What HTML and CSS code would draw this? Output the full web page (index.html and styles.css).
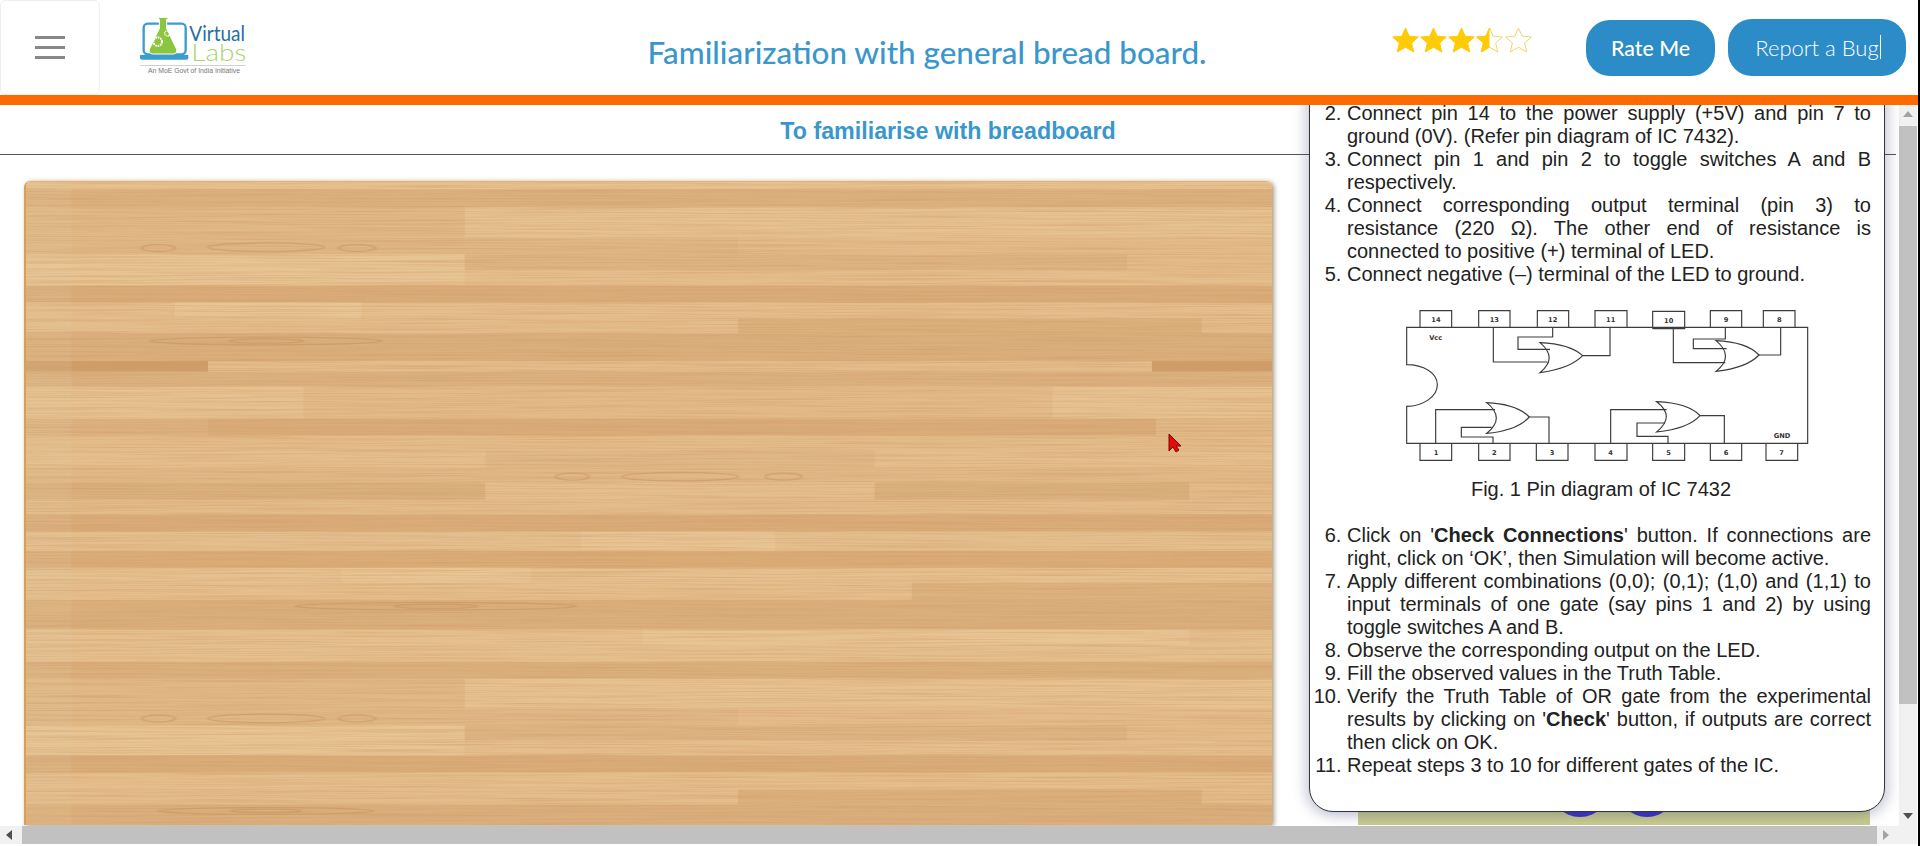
FILE: index.html
```html
<!DOCTYPE html>
<html lang="en">
<head>
  <meta charset="UTF-8" />
  <meta name="viewport" content="width=device-width, initial-scale=1.0"/>
  <title>Familiarization with general bread board.</title>
  <link rel="stylesheet" href="styles.css">
</head>
<body>

  <div class="page">
    <div class="navbar">
      <div class="menu-btn" role="button" aria-label="Menu">
        <span></span><span></span><span></span>
      </div>
      <svg class="logo" viewBox="0 0 450 270" aria-label="Virtual Labs">
        <rect x="71" y="71" width="126" height="92" rx="12" fill="none" stroke="#3b9ccf" stroke-width="7"/>
        <path d="M60 165h145v8q0 6 -6 6h-133q-6 0 -6 -6z" fill="#3b9ccf"/>
        <path d="M118 52h26v6h-4v28l30 62q3 12 -10 14h-62q-13 -2 -10 -14l30 -62v-28h-4z" fill="#8cc63f" stroke="#fff" stroke-width="3"/>
        <circle cx="113" cy="125" r="13" fill="none" stroke="#fff" stroke-width="6" stroke-dasharray="5 2.5"/>
        <circle cx="142" cy="100" r="8" fill="none" stroke="#fff" stroke-width="4" stroke-dasharray="4 2"/>
        <text class="logo-virtual" x="208" y="122" textLength="167" lengthAdjust="spacingAndGlyphs">Virtual</text>
        <text class="logo-labs" x="214" y="184" textLength="165" lengthAdjust="spacingAndGlyphs">Labs</text>
        <rect x="60" y="196" width="316" height="2" fill="#bbb"/>
        <text class="logo-tag" x="84" y="220" textLength="276" lengthAdjust="spacingAndGlyphs">An MoE Govt of India Initiative</text>
      </svg>
      <h1 class="title">Familiarization with general bread board.</h1>
      <svg class="stars" viewBox="0 0 141 26" aria-label="Rated 3.5 out of 5">
        <defs>
          <polygon id="star" points="13.5,1 17.2,9.2 26.3,10 19.6,16 21.8,25 13.5,20.2 5.2,25 7.4,16 0.7,10 9.8,9.2"/>
          <clipPath id="half"><rect x="0" y="0" width="13.5" height="26"/></clipPath>
        </defs>
        <use href="#star" x="0" class="star-full"/>
        <use href="#star" x="28" class="star-full"/>
        <use href="#star" x="56" class="star-full"/>
        <use href="#star" x="84" class="star-empty"/>
        <use href="#star" x="84" class="star-full" clip-path="url(#half)"/>
        <use href="#star" x="113" class="star-empty"/>
      </svg>
      <div class="nav-buttons">
        <button class="nav-btn rate-btn">Rate Me</button>
        <button class="nav-btn bug-btn">Report a Bug<span class="caret"></span></button>
      </div>
    </div>

    <div class="content">
      <h2 class="subtitle">To familiarise with breadboard</h2>
      <div class="workspace">
        <div class="board">
          <svg class="wood" viewBox="30 25 1505 1508" preserveAspectRatio="none">
            <defs>
              <filter id="grain" x="0" y="0" width="100%" height="100%">
                <feTurbulence type="fractalNoise" baseFrequency="0.005 0.3" numOctaves="4" seed="7"/>
                <feColorMatrix values="0 0 0 0 0.62  0 0 0 0 0.32  0 0 0 0 0.14  2.4 0 0 0 -0.95"/>
              </filter>
              <filter id="soft"><feGaussianBlur stdDeviation="1.5"/></filter>
            </defs>
            <rect x="30" y="25" width="1505" height="1508" fill="#e3bc8a"/>
            <rect x="30" y="25" width="1505" height="17" fill="#e8c28e"/>
            <rect x="30" y="42" width="1505" height="43" fill="#dcb17e"/>
            <rect x="30" y="85" width="530" height="70" fill="#e0b986"/>
            <rect x="560" y="85" width="975" height="70" fill="#e6c291"/>
            <rect x="30" y="155" width="860" height="40" fill="#dfb885"/>
            <rect x="890" y="155" width="645" height="40" fill="#e3bc8a"/>
            <rect x="30" y="195" width="530" height="73" fill="#e7c493"/>
            <rect x="560" y="195" width="800" height="37" fill="#ddb582"/>
            <rect x="560" y="232" width="975" height="36" fill="#e4be8c"/>
            <rect x="30" y="268" width="1505" height="40" fill="#d9ac78"/>
            <rect x="30" y="308" width="1505" height="37" fill="#e4be8c"/>
            <rect x="210" y="308" width="225" height="37" fill="#e8c595"/>
            <rect x="30" y="345" width="860" height="35" fill="#e3bd8b"/>
            <rect x="890" y="345" width="560" height="35" fill="#dbb07b"/>
            <rect x="30" y="380" width="1505" height="65" fill="#daaf7b"/>
            <rect x="30" y="445" width="220" height="25" fill="#cf9d68"/>
            <rect x="250" y="445" width="1140" height="25" fill="#e3bd8b"/>
            <rect x="1390" y="445" width="145" height="25" fill="#cf9d68"/>
            <rect x="30" y="470" width="1505" height="35" fill="#dbb17e"/>
            <rect x="30" y="505" width="1505" height="75" fill="#e6c291"/>
            <rect x="365" y="505" width="905" height="75" fill="#e2bb89"/>
            <rect x="30" y="580" width="220" height="40" fill="#dcb27f"/>
            <rect x="250" y="580" width="1145" height="40" fill="#d9ac78"/>
            <rect x="1395" y="580" width="140" height="40" fill="#e0b986"/>
            <rect x="30" y="620" width="1505" height="35" fill="#e3bc8a"/>
            <rect x="30" y="655" width="1505" height="40" fill="#e4bf8d"/>
            <rect x="585" y="655" width="470" height="40" fill="#dfb887"/>
            <rect x="30" y="695" width="1505" height="35" fill="#e0b986"/>
            <rect x="30" y="730" width="555" height="40" fill="#dab07c"/>
            <rect x="585" y="730" width="470" height="40" fill="#e4bf8d"/>
            <rect x="1055" y="730" width="380" height="40" fill="#dab07c"/>
            <rect x="30" y="770" width="1505" height="35" fill="#e2bc8a"/>
            <rect x="30" y="805" width="1505" height="40" fill="#d9ac78"/>
            <rect x="30" y="845" width="1505" height="45" fill="#e4bf8e"/>
            <rect x="700" y="845" width="235" height="45" fill="#e7c494"/>
            <rect x="30" y="890" width="1505" height="40" fill="#d9ac78"/>
            <rect x="30" y="930" width="1505" height="35" fill="#e5c090"/>
            <rect x="410" y="930" width="230" height="35" fill="#e8c595"/>
            <rect x="30" y="965" width="1070" height="40" fill="#e4be8c"/>
            <rect x="1100" y="965" width="435" height="40" fill="#dcb27f"/>
            <rect x="30" y="1005" width="1505" height="70" fill="#daaf7b"/>
            <rect x="30" y="1075" width="1505" height="75" fill="#e5c08f"/>
            <rect x="775" y="1075" width="660" height="35" fill="#e8c595"/>
            <rect x="30" y="1150" width="1505" height="40" fill="#dab07c"/>
            <rect x="30" y="1190" width="530" height="70" fill="#e0b986"/>
            <rect x="560" y="1190" width="975" height="70" fill="#e6c291"/>
            <rect x="30" y="1260" width="860" height="40" fill="#dfb885"/>
            <rect x="890" y="1260" width="645" height="40" fill="#e3bc8a"/>
            <rect x="30" y="1300" width="530" height="70" fill="#e7c493"/>
            <rect x="560" y="1300" width="800" height="35" fill="#ddb582"/>
            <rect x="560" y="1335" width="975" height="35" fill="#e4be8c"/>
            <rect x="30" y="1370" width="1505" height="40" fill="#d9ac78"/>
            <rect x="30" y="1410" width="1505" height="40" fill="#e4be8c"/>
            <rect x="30" y="1450" width="860" height="35" fill="#e3bd8b"/>
            <rect x="890" y="1450" width="560" height="35" fill="#dbb07b"/>
            <rect x="30" y="1485" width="1505" height="48" fill="#daaf7b"/>
            <rect x="30" y="25" width="55" height="1508" fill="#e6cda4" opacity=".18"/>
            <g fill="none" stroke="#c08c55" stroke-width="3" opacity=".45" filter="url(#soft)">
              <ellipse cx="320" cy="398" rx="140" ry="9"/><ellipse cx="320" cy="398" rx="45" ry="5"/>
              <ellipse cx="525" cy="1020" rx="170" ry="9"/><ellipse cx="525" cy="1020" rx="50" ry="5"/>
              <ellipse cx="320" cy="1500" rx="130" ry="8"/><ellipse cx="320" cy="1500" rx="42" ry="4"/>
              <ellipse cx="320" cy="178" rx="70" ry="10"/><ellipse cx="190" cy="180" rx="20" ry="8"/><ellipse cx="430" cy="180" rx="22" ry="8"/>
              <ellipse cx="820" cy="716" rx="70" ry="10"/><ellipse cx="690" cy="716" rx="20" ry="8"/><ellipse cx="945" cy="716" rx="22" ry="8"/>
              <ellipse cx="320" cy="1283" rx="70" ry="10"/><ellipse cx="190" cy="1283" rx="20" ry="8"/><ellipse cx="430" cy="1283" rx="22" ry="8"/>
            </g>
            <rect x="30" y="25" width="1505" height="1508" filter="url(#grain)" opacity=".42"/>
          </svg>
          <svg class="pointer" viewBox="0 0 14 20">
            <path d="M1 1v17l4 -4 3 5 3 -2 -3 -4h5z" fill="#e60b0b" stroke="#7a0505" stroke-width="1"/>
          </svg>
        </div>
        <div class="breadboard">
          <span class="bb-dot bb-dot-a"></span>
          <span class="bb-dot bb-dot-b"></span>
        </div>
      </div>
    </div>

    <div class="instructions">
      <ol class="steps" start="2">
        <li>Connect pin 14 to the power supply (+5V) and pin 7 to ground (0V). (Refer pin diagram of IC 7432).</li>
        <li>Connect pin 1 and pin 2 to toggle switches A and B respectively.</li>
        <li>Connect corresponding output terminal (pin 3) to resistance (220 Ω). The other end of resistance is connected to positive (+) terminal of LED.</li>
        <li>Connect negative (–) terminal of the LED to ground.</li>
      </ol>
      <figure class="pin-fig">
        <svg class="pin-diagram" viewBox="0 40 1320 465">
          <g fill="none" stroke="#3c3c3c" stroke-width="3.5">
            <path d="M80 98H1283V446H80V335C130 335 172 305 172 270S130 210 80 210Z"/>
            <path d="M120 98V48H215V98M296 98V48H390V98M472 98V48H566V98M645 98V48H741V98M818 102V50H914V102H818M991 98V48H1085V98M1150 98V48H1245V98"/>
            <path d="M120 446V497H215V446M296 446V497H390V446M469 446V497H564V446M645 446V497H741V446M818 446V497H914V446M991 446V497H1085V446M1158 446V497H1253V446"/>
            <path d="M340 98V202H502M518 98V127H414V164H510M608 183H690V98"/>
            <path d="M480 144Q570 148 608 183Q570 222 480 234Q535 190 480 144Z"/>
            <path d="M880 98V204H1036M1036 98V133H940V162H1040M1137 181H1202V98"/>
            <path d="M1008 138Q1100 142 1137 181Q1100 220 1008 230Q1065 185 1008 138Z"/>
            <path d="M167 446V345H345M339 446V427H244V398H335M448 367H507V446"/>
            <path d="M320 324Q410 328 448 367Q410 408 320 416Q378 370 320 324Z"/>
            <path d="M692 446V345H860M864 446V425H771V385H855M960 363H1033V446"/>
            <path d="M830 321Q925 325 960 363Q925 402 830 412Q888 365 830 321Z"/>
          </g>
          <g class="pin-labels">
            <text x="168" y="82">14</text><text x="343" y="82">13</text><text x="518" y="82">12</text><text x="692" y="82">11</text>
            <text x="866" y="84">10</text><text x="1038" y="82">9</text><text x="1198" y="82">8</text>
            <text x="168" y="480">1</text><text x="343" y="480">2</text><text x="516" y="480">3</text><text x="692" y="480">4</text>
            <text x="866" y="480">5</text><text x="1038" y="480">6</text><text x="1205" y="480">7</text>
            <text x="167" y="135">Vcc</text><text x="1206" y="429">GND</text>
          </g>
        </svg>
        <figcaption>Fig. 1 Pin diagram of IC 7432</figcaption>
      </figure>
      <ol class="steps" start="6">
        <li>Click on '<b>Check Connections</b>' button. If connections are right, click on ‘OK’, then Simulation will become active.</li>
        <li>Apply different combinations (0,0); (0,1); (1,0) and (1,1) to input terminals of one gate (say pins 1 and 2) by using toggle switches A and B.</li>
        <li>Observe the corresponding output on the LED.</li>
        <li>Fill the observed values in the Truth Table.</li>
        <li>Verify the Truth Table of OR gate from the experimental results by clicking on '<b>Check</b>' button, if outputs are correct then click on OK.</li>
        <li>Repeat steps 3 to 10 for different gates of the IC.</li>
      </ol>
    </div>

    <div class="vscroll">
      <span class="arrow arrow-up"></span>
      <div class="vthumb"></div>
      <span class="arrow arrow-down"></span>
    </div>
    <div class="hscroll">
      <span class="arrow arrow-left"></span>
      <div class="hthumb"></div>
      <span class="arrow arrow-right"></span>
    </div>
  </div>

</body>
</html>
```

FILE: styles.css
```css
* {
  margin: 0;
  padding: 0;
  box-sizing: border-box;
}

body {
  height: 100vh;
  overflow: hidden;
  background: #000;
  font-family: "Liberation Sans", Arial, sans-serif;
}

.page {
  position: relative;
  width: 1918px;
  height: 846px;
  overflow: hidden;
  background: #fff;
}

.navbar {
  position: relative;
  z-index: 3;
  height: 105px;
  display: flex;
  align-items: flex-start;
  background: #fff;
  border-bottom: 10px solid #ff6a00;
}

.menu-btn {
  width: 100px;
  height: 95px;
  border: 1px solid #eee;
  border-radius: 6px;
  display: flex;
  flex-direction: column;
  align-items: center;
  justify-content: center;
  gap: 7px;
}

.menu-btn span {
  display: block;
  width: 30px;
  height: 3px;
  background: #888;
}

.logo {
  width: 150px;
  height: 90px;
  margin-left: 20px;
}

.logo-virtual {
  font-family: "Lato", sans-serif;
  font-size: 64px;
  fill: #1f6f9f;
}

.logo-labs {
  font-family: "Lato", sans-serif;
  font-weight: 300;
  font-size: 72px;
  fill: #a9d273;
}

.logo-tag {
  font-family: "Liberation Sans", sans-serif;
  font-size: 20px;
  fill: #777;
}

.title {
  width: 1122px;
  padding: 33px 0 0 192px;
  text-align: center;
  font-family: "Lato", sans-serif;
  font-size: 31.4px;
  font-weight: 500;
  color: #3a97cb;
  white-space: nowrap;
}

.stars {
  width: 141px;
  height: 26px;
  margin: 27px 0 0 0;
}

.star-full {
  fill: #ffcb05;
  stroke: #ffcb05;
  stroke-width: 1;
}

.star-empty {
  fill: #fff;
  stroke: #f2d66a;
  stroke-width: 1;
}

.nav-buttons {
  display: flex;
  gap: 13px;
  margin: 19px 0 0 53px;
}

.nav-btn {
  height: 56px;
  margin-top: 1px;
  border: none;
  border-radius: 24px;
  background: #2b8cc8;
  color: #fff;
  font-family: "Lato", sans-serif;
}

.rate-btn {
  width: 129px;
  font-size: 21.3px;
  font-weight: 500;
}

.bug-btn {
  position: relative;
  width: 178px;
  height: 57px;
  margin-top: 0;
  font-size: 22px;
  font-weight: 300;
}

.caret {
  position: absolute;
  left: 152px;
  top: 16px;
  width: 1px;
  height: 24px;
  background: #fff;
}

.subtitle {
  height: 50px;
  width: 1896px;
  padding-top: 13px;
  border-bottom: 1px solid #555;
  text-align: center;
  font-size: 23.25px;
  line-height: 26px;
  font-weight: bold;
  color: #3a97cb;
}

.workspace {
  display: flex;
  align-items: flex-start;
  padding: 26px 0 0 24px;
}

.board {
  position: relative;
  width: 1248px;
  height: 644px;
  border-left: 2px solid #d9a04f;
  border-top: 1px solid #e3b36b;
  border-radius: 6px 6px 0 0;
  box-shadow: 2px 1px 5px rgba(90, 60, 20, 0.55);
  overflow: hidden;
}

.wood {
  display: block;
  width: 100%;
  height: 100%;
}

.pointer {
  position: absolute;
  left: 1142px;
  top: 251px;
  width: 14px;
  height: 20px;
}

.breadboard {
  position: relative;
  width: 512px;
  height: 644px;
  margin-left: 86px;
  background: #c9cc8f;
  overflow: hidden;
}

.bb-dot {
  position: absolute;
  top: 576px;
  width: 60px;
  height: 60px;
  border-radius: 50%;
  background: #3a2fc9;
}

.bb-dot-a {
  left: 192px;
}

.bb-dot-b {
  left: 259px;
}

.instructions {
  position: absolute;
  z-index: 2;
  left: 1309px;
  top: 90px;
  width: 576px;
  height: 722px;
  padding: 11px 13px 0 0;
  background: #fff;
  border: 1px solid #333;
  border-radius: 0 0 24px 24px;
  box-shadow: -4px 2px 14px rgba(60, 70, 120, 0.22), 4px 2px 14px rgba(60, 70, 120, 0.22);
  font-size: 20px;
  line-height: 23px;
  color: #222;
}

.steps {
  padding-left: 37px;
  text-align: justify;
}

.pin-fig {
  margin: 22px 0 23px 0;
  text-align: center;
}

.pin-diagram {
  display: block;
  width: 440px;
  height: 155px;
  margin-left: 70px;
}

.pin-labels text {
  font-family: "DejaVu Sans", sans-serif;
  font-weight: bold;
  font-size: 20px;
  fill: #333;
  text-anchor: middle;
}

.pin-fig figcaption {
  margin-top: 15px;
  padding-left: 21px;
}

.vscroll {
  position: absolute;
  right: 1px;
  top: 105px;
  width: 18px;
  height: 721px;
  background: #f1f1f1;
}

.vthumb {
  position: absolute;
  left: 0;
  top: 21px;
  width: 18px;
  height: 578px;
  background: #c1c1c1;
}

.hscroll {
  position: absolute;
  left: 0;
  right: 1px;
  bottom: 2px;
  height: 18px;
  background: #f1f1f1;
}

.hthumb {
  position: absolute;
  left: 22px;
  top: 0;
  width: 1855px;
  height: 18px;
  background: #c1c1c1;
}

.arrow {
  position: absolute;
  width: 0;
  height: 0;
  border: 5px solid transparent;
}

.arrow-up {
  left: 4px;
  top: 6px;
  border-bottom: 6px solid #a3a3a3;
  border-top: none;
}

.arrow-down {
  left: 4px;
  bottom: 7px;
  border-top: 6px solid #505050;
  border-bottom: none;
}

.arrow-left {
  left: 6px;
  top: 4px;
  border-right: 6px solid #505050;
  border-left: none;
}

.arrow-right {
  left: 1883px;
  top: 4px;
  border-left: 6px solid #a3a3a3;
  border-right: none;
}
```
